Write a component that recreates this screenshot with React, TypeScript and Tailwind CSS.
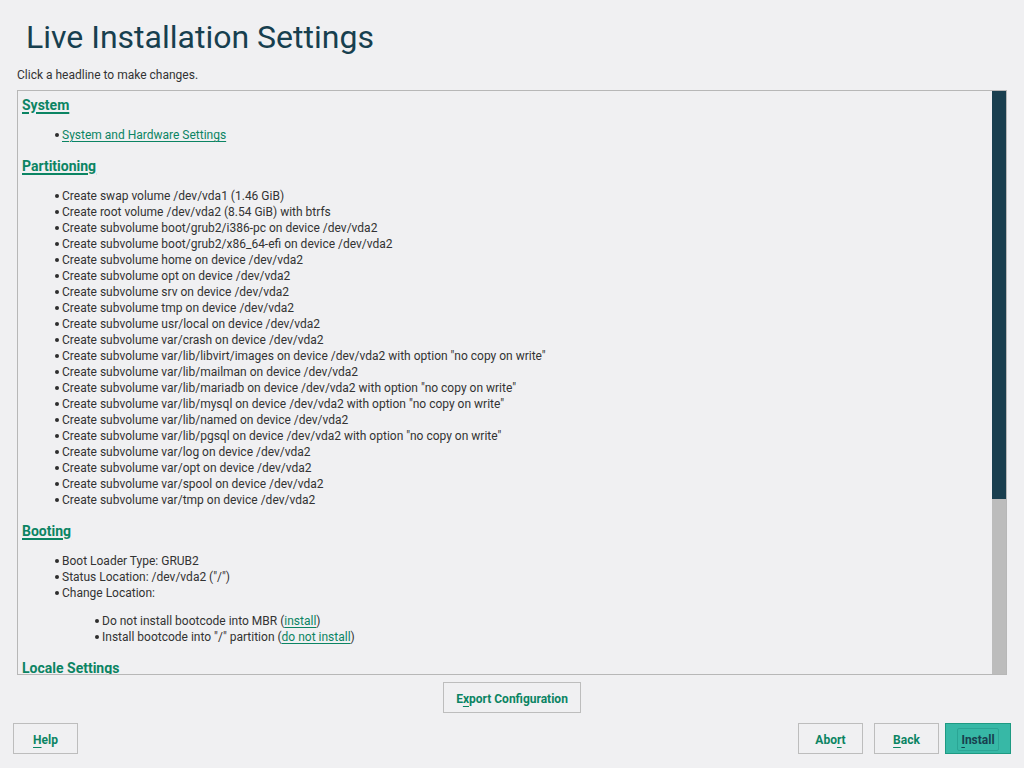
import React from "react";

/* ---------------------------------------------------------
 * Daten – Zusammenfassung der Installationseinstellungen
 * --------------------------------------------------------- */
const partitioning = [
  "Create swap volume /dev/vda1 (1.46 GiB)",
  "Create root volume /dev/vda2 (8.54 GiB) with btrfs",
  "Create subvolume boot/grub2/i386-pc on device /dev/vda2",
  "Create subvolume boot/grub2/x86_64-efi on device /dev/vda2",
  "Create subvolume home on device /dev/vda2",
  "Create subvolume opt on device /dev/vda2",
  "Create subvolume srv on device /dev/vda2",
  "Create subvolume tmp on device /dev/vda2",
  "Create subvolume usr/local on device /dev/vda2",
  "Create subvolume var/crash on device /dev/vda2",
  'Create subvolume var/lib/libvirt/images on device /dev/vda2 with option "no copy on write"',
  "Create subvolume var/lib/mailman on device /dev/vda2",
  'Create subvolume var/lib/mariadb on device /dev/vda2 with option "no copy on write"',
  'Create subvolume var/lib/mysql on device /dev/vda2 with option "no copy on write"',
  "Create subvolume var/lib/named on device /dev/vda2",
  'Create subvolume var/lib/pgsql on device /dev/vda2 with option "no copy on write"',
  "Create subvolume var/log on device /dev/vda2",
  "Create subvolume var/opt on device /dev/vda2",
  "Create subvolume var/spool on device /dev/vda2",
  "Create subvolume var/tmp on device /dev/vda2",
];

const FONT = "font-['Roboto','Liberation_Sans',sans-serif]";

function Headline({ children }: { children: React.ReactNode }) {
  return (
    <div className="pl-[4px] mb-[13px]">
      <a
        href="#"
        className="text-[14px] leading-[18px] font-bold text-[#0b8463] underline decoration-[1.5px] underline-offset-2"
      >
        {children}
      </a>
    </div>
  );
}

function Item({
  children,
  indent = 37,
}: {
  children: React.ReactNode;
  indent?: number;
}) {
  return (
    <li className="flex items-start" style={{ paddingLeft: indent }}>
      <span className="mt-[6px] w-[4px] h-[4px] rounded-full bg-[#2e2e2e] shrink-0 mr-[3px]" />
      <span className="whitespace-nowrap">{children}</span>
    </li>
  );
}

function InlineLink({ children }: { children: React.ReactNode }) {
  return (
    <a href="#" className="text-[#0b8463] underline underline-offset-2">
      {children}
    </a>
  );
}

/* Button mit unterstrichenem Mnemonic-Buchstaben */
function Btn({
  before = "",
  key_,
  after,
  width,
  primary = false,
}: {
  before?: string;
  key_: string;
  after: string;
  width: number;
  primary?: boolean;
}) {
  return (
    <button
      type="button"
      style={{ width }}
      className={
        primary
          ? "h-[31px] pt-[2px] bg-[#37b8a6] border border-[#1d9a82] flex items-center justify-center"
          : "h-[31px] pt-[2px] bg-[#f0f0f2] border border-[#bdbdbd] flex items-center justify-center"
      }
    >
      <span
        className={
          primary
            ? "px-[3px] h-[23px] flex items-center border border-[#2ba595] rounded-[2px] text-[12px] font-bold text-[#17404f]"
            : "text-[12px] font-bold text-[#0b8463]"
        }
      >
        {before}
        <span className="underline underline-offset-[3px]">{key_}</span>
        {after}
      </span>
    </button>
  );
}

export default function App() {
  return (
    <div
      className={`${FONT} w-[1024px] h-[768px] bg-[#f0f0f2] flex flex-col overflow-hidden`}
    >
      {/* Titel */}
      <h1 className="pt-[17px] pl-[26px] text-[32px] leading-[40px] text-[#173f4f]">
        Live Installation Settings
      </h1>
      <p className="mt-[10px] pl-[17px] text-[12px] leading-[16px] text-[#333]">
        Click a headline to make changes.
      </p>

      {/* Inhaltsbox mit Scrollbar */}
      <div className="mt-[7px] ml-[17px] w-[990px] h-[585px] border border-[#b7b7b7] flex">
        <div className="flex-1 overflow-hidden pt-[5px] text-[12px] leading-[16px] text-[#333]">
          <Headline>System</Headline>
          <ul className="mb-[14px]">
            <Item>
              <InlineLink>System and Hardware Settings</InlineLink>
            </Item>
          </ul>

          <Headline>Partitioning</Headline>
          <ul className="mb-[14px]">
            {partitioning.map((p) => (
              <Item key={p}>{p}</Item>
            ))}
          </ul>

          <Headline>Booting</Headline>
          <ul className="mb-[14px]">
            <Item>Boot Loader Type: GRUB2</Item>
            <Item>Status Location: /dev/vda2 ("/")</Item>
            <Item>Change Location:</Item>
            <li>
              <ul className="mt-[12px]">
                <Item indent={77}>
                  Do not install bootcode into MBR (<InlineLink>install</InlineLink>)
                </Item>
                <Item indent={77}>
                  Install bootcode into "/" partition (
                  <InlineLink>do not install</InlineLink>)
                </Item>
              </ul>
            </li>
          </ul>

          <Headline>Locale Settings</Headline>
        </div>

        {/* Scrollbar */}
        <div className="w-[14px] flex flex-col">
          <div className="h-[408px] bg-[#1a3f4f]" />
          <div className="flex-1 bg-[#bcbcbc]" />
        </div>
      </div>

      {/* Export */}
      <div className="mt-[7px] flex justify-center">
        <Btn before="E" key_="x" after="port Configuration" width={138} />
      </div>

      {/* Untere Buttonleiste */}
      <div className="mt-[10px] px-[13px] flex items-center">
        <Btn key_="H" after="elp" width={65} />
        <div className="flex-1" />
        <Btn before="Abo" key_="r" after="t" width={65} />
        <div className="w-[11px]" />
        <Btn key_="B" after="ack" width={65} />
        <div className="w-[6px]" />
        <Btn key_="I" after="nstall" width={66} primary />
      </div>
    </div>
  );
}
